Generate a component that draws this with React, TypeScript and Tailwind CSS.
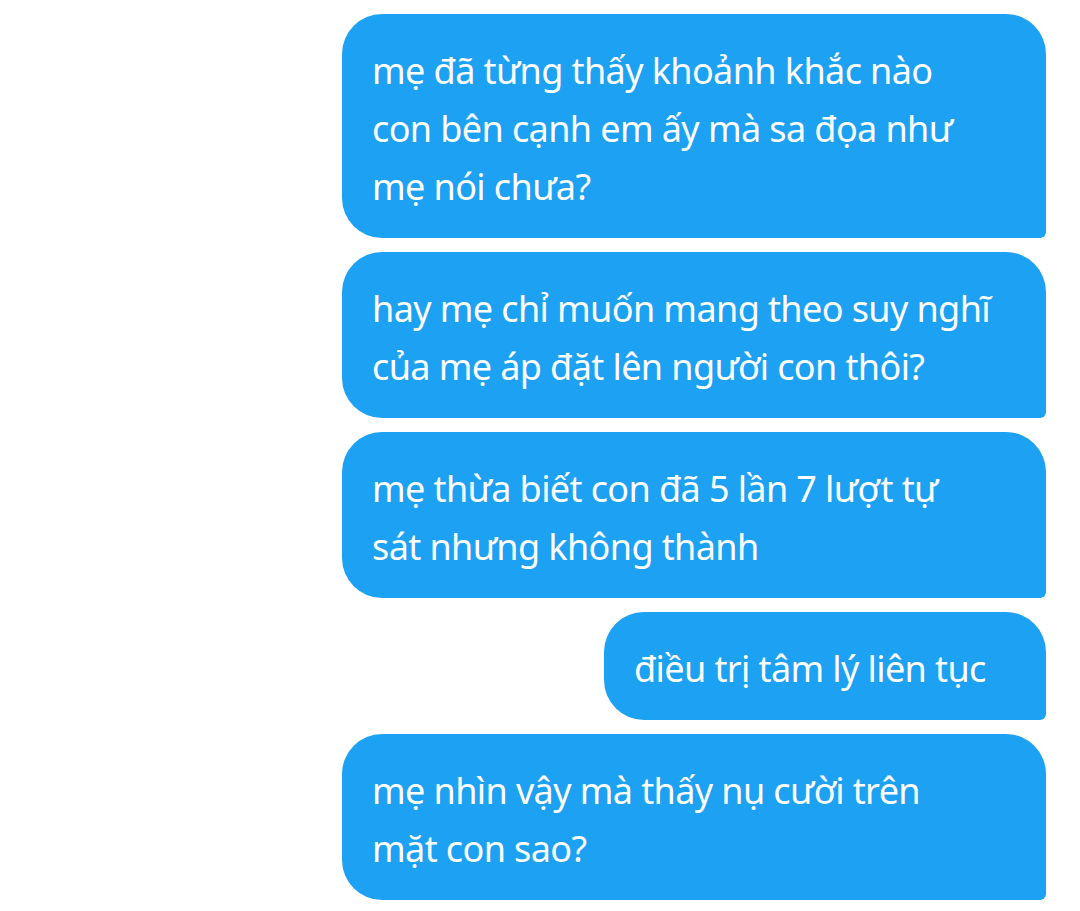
import React from "react";

const msgs: { lines: string[]; w: string }[] = [
  { lines: ["mẹ đã từng thấy khoảnh khắc nào", "con bên cạnh em ấy mà sa đọa như", "mẹ nói chưa?"], w: "w-[704px]" },
  { lines: ["hay mẹ chỉ muốn mang theo suy nghĩ", "của mẹ áp đặt lên người con thôi?"], w: "w-[704px]" },
  { lines: ["mẹ thừa biết con đã 5 lần 7 lượt tự", "sát nhưng không thành"], w: "w-[704px]" },
  { lines: ["điều trị tâm lý liên tục"], w: "w-[442px]" },
  { lines: ["mẹ nhìn vậy mà thấy nụ cười trên", "mặt con sao?"], w: "w-[704px]" },
];

export default function App() {
  return (
    <div
      className="w-[1080px] h-[911px] bg-white flex flex-col items-end gap-[14px] pt-[14px] pr-[34px] overflow-hidden"
      style={{ fontFamily: '"Noto Sans", "Open Sans", sans-serif' }}
    >
      {msgs.map((m, i) => (
        <div
          key={i}
          className={`${m.w} bg-[#1da1f2] text-white rounded-[40px] rounded-br-[6px] pl-[30px] pr-[30px] pt-[28px] pb-[22px] text-[36px] leading-[58px] tracking-[-0.6px]`}
        >
          {m.lines.map((l, j) => (
            <div key={j} className="whitespace-nowrap">
              {l}
            </div>
          ))}
        </div>
      ))}
    </div>
  );
}
